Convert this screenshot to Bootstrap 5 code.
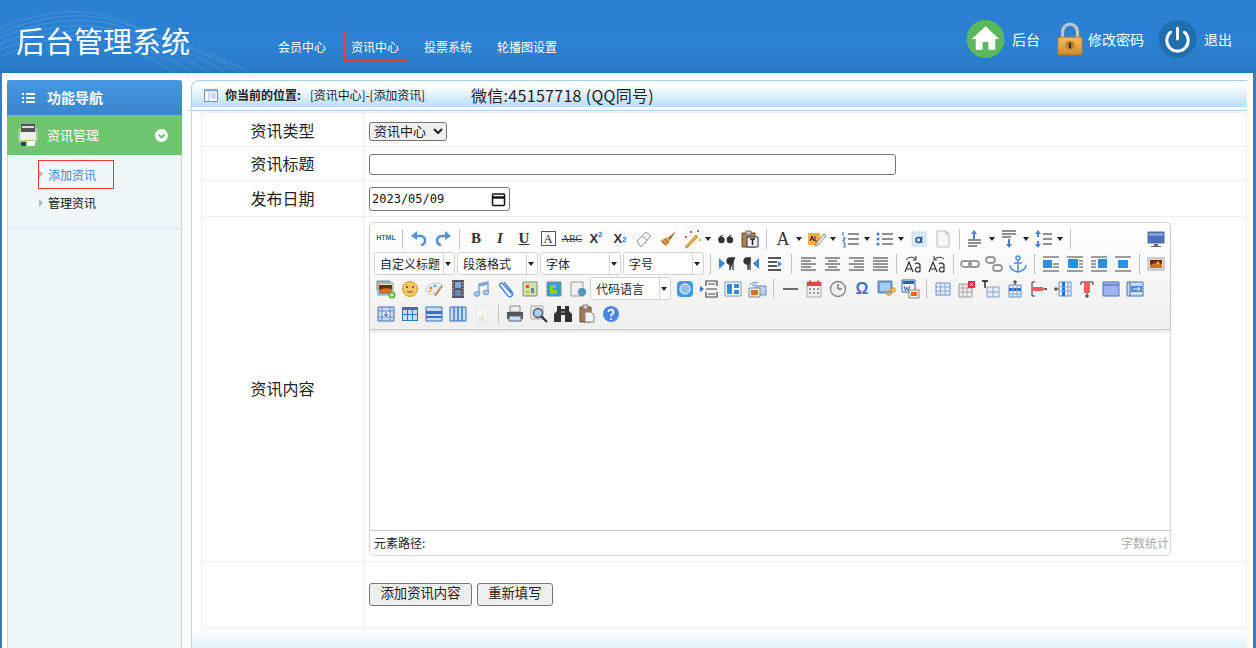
<!DOCTYPE html>
<html lang="zh-CN">
<head>
    <meta charset="UTF-8">
    <meta name="viewport" content="width=device-width, initial-scale=1.0">
    <title>后台管理系统</title>
    <link href="https://cdn.jsdelivr.net/npm/bootstrap@5.3.0/dist/css/bootstrap.min.css" rel="stylesheet">
    <style>
        html, body { height: 100%; overflow: hidden; }
        body { background: #2a82d2; font-family: "Noto Sans CJK SC", "Liberation Sans", sans-serif; font-size: 12px; color: #222; }

        .top-bar { position: relative; height: 73px; background: linear-gradient(#2b80cf, #2b82d3 60%, #2a7cc8 95%, #2471b8); color: #fff; overflow: hidden; }
        .top-wave { position: absolute; left: 0; top: 0; }
        .top-title { position: relative; width: 262px; padding-left: 16px; font-size: 29px; line-height: 80px; white-space: nowrap; }
        .top-nav { position: relative; padding-top: 31px; }
        .top-link { display: block; width: 73px; height: 30px; padding-left: 15px; line-height: 30px; color: #fff; text-decoration: none; white-space: nowrap; border: 1px solid transparent; }
        .top-link.on { border-color: transparent transparent #ea3a3a #ea3a3a; width: 65px; margin: 0 -1px 0 9px; padding-left: 6px; }
        .top-tools { position: relative; padding-right: 24px; padding-top: 19px; font-size: 14px; }
        .tool-item { height: 40px; line-height: 40px; color: #fff; text-decoration: none; white-space: nowrap; }
        .tool-home { margin-right: 17px; }
        .tool-lock { margin-right: 14px; }
        .tool-icon { margin-right: 7px; }
        .tool-lock .tool-icon { margin-right: 5px; }

        .page-wrap { height: 575px; margin: 0 3px 0 2px; background: linear-gradient(#eaf2f8, #fff 7px); }
        .side-col { width: 175px; margin: 7px 9px 0 5px; flex: none; background: #f0f7fb; border: solid #c5d5e2; border-width: 0 1px 0 1px; }
        .side-head { height: 35px; margin: 0 -1px; padding-left: 15px; background: linear-gradient(#4498e2, #3b86cc); border-radius: 3px 3px 0 0; color: #fff; font-size: 14px; font-weight: 700; }
        .side-head svg { margin-right: 12px; }
        .side-group { height: 40px; margin: 0 -1px 0 -1px; padding: 0 14px 0 11px; background: #6dc66f; color: #fff; font-size: 13px; }
        .side-group svg:first-child { margin-right: 9px; }
        .side-list { height: 74px; border-bottom: 1px solid #dce7ef; padding-top: 5px; }
        .side-link { position: relative; display: block; width: 76px; height: 29px; margin-left: 30px; padding-left: 9px; line-height: 27px; color: #111; text-decoration: none; border: 1px solid transparent; }
        .side-link + .side-link { height: 28px; line-height: 26px; }
        .side-link::before { content: ""; position: absolute; left: 0; top: 9px; border: 4px solid transparent; border-left-color: #a9bccb; border-right: 0; }
        .side-link.on { border-color: #ea3a3a; color: #4a7fd6; }

        .main-col { width: 1062px; flex: none; padding-top: 7px; }
        .crumb-line { margin: 0 6px 0 -3px; padding: 0 0 1px 3px; border-bottom: 1px solid #a8d4f0; }
        .crumb-bar { height: 29px; padding-left: 12px; border: solid #a4d2f0; border-width: 1px 0 0 1px; border-radius: 8px 0 0 0; background: linear-gradient(#fff 15%, #b9dff7 92%, #fff 93%); }
        .crumb-bar b { margin-left: 7px; }
        .crumb-path { margin-left: 9px; letter-spacing: -.1px; }
        .crumb-wx { margin-left: 46px; font-size: 16px; letter-spacing: .3px; }
        .form-pane { margin-right: 6px; padding: 1px 0 0 9px; border-left: 1px solid #c5d5e2; }
        .pane-foot { height: 20px; margin-right: 6px; border-left: 1px solid #c5d5e2; background: linear-gradient(#fff, #e2f1fb); }

        .info-tbl { table-layout: fixed; width: 1046px; margin: 0; --bs-border-color: #eee; }
        .info-tbl td { padding: 0 5px; vertical-align: middle; }
        .info-tbl .tbl-label { width: 162px; text-align: center; font-size: 16px; color: #222; }
        .info-tbl .r-title .tbl-label, .info-tbl .r-date .tbl-label, .info-tbl .r-editor .tbl-label { padding-bottom: 2px; }
        .r-type { height: 34px; } .info-tbl .r-type td:last-child { padding-top: 3px; }
        .r-title { height: 34px; } .info-tbl .r-title td:last-child { padding-top: 2px; }
        .r-date { height: 36px; } .info-tbl .r-date td:last-child { padding-top: 1px; }
        .r-editor { height: 345px; } .info-tbl .r-editor td:last-child { padding-top: 5px; padding-bottom: 5px; vertical-align: top; }
        .r-actions { height: 67px; } .info-tbl .r-actions td:last-child { padding-bottom: 2px; }
        .plain-select { display: block; width: 78px; height: 19px; font: 13px "Liberation Sans", "Noto Sans CJK SC", sans-serif; color: #222; padding: 0; border-radius: 3px; }
        .plain-input { display: block; width: 527px; height: 21px; border: 1px solid #767676; border-radius: 3px; }
        .plain-date { width: 141px; height: 24px; padding: 0 3px 0 2px; background: #fff; border: 1px solid #767676; border-radius: 3px; }
        .date-text { width: 110px; padding: 0; border: 0; outline: 0; font: 12px "DejaVu Sans Mono", monospace; color: #111; }
        .plain-btn { height: 23px; padding: 0 10.5px; font: 13.33px/20px "Liberation Sans", "Noto Sans CJK SC", sans-serif; background: #efefef; color: #222; border: 1px solid #767676; border-radius: 3px; margin-right: 2px; }

        .edit-box { width: 802px; height: 334px; border: 1px solid #d4d4d4; border-radius: 5px; background: #fff; }
        .edit-bar { height: 107px; padding: 3px 2px 0 4px; background: linear-gradient(#fff, #efefef); border-bottom: 1px solid #ccc; border-radius: 5px 5px 0 0; box-shadow: 0 2px 4px rgba(0, 0, 0, .12); }
        .edit-row { height: 25px; }
        .tb-btn { display: flex; align-items: center; justify-content: center; width: 24px; height: 25px; flex: none; color: #333; }
        .tb-btn svg { width: 20px; height: 20px; display: block; }
        .tb-split { width: 34px; justify-content: flex-start; padding-left: 2px; }
        .tb-split::after { content: ""; margin-left: 3px; border: 3px solid transparent; border-top: 4px solid #222; border-bottom: 0; }
        .tb-sep { width: 9px; height: 20px; flex: none; background: linear-gradient(#c4c4c4, #c4c4c4) center / 1px 100% no-repeat; }
        .tb-combo { display: flex; width: 81px; height: 23px; margin-right: 2px; flex: none; background: #fff; border: 1px solid #d4d4d4; border-radius: 3px; line-height: 21px; padding-left: 5px; white-space: nowrap; position: relative; }
        .tb-combo::after { content: ""; position: absolute; right: 0; top: 0; bottom: 0; width: 11px; border-left: 1px solid #d4d4d4; }
        .tb-combo::before { content: ""; position: absolute; right: 3px; top: 9px; border: 3px solid transparent; border-top: 4px solid #222; border-bottom: 0; }
        .tb-serif { font-family: "Liberation Serif", serif; font-size: 15px; font-weight: 700; line-height: 1; color: #333; }
        .tb-html { font-family: "Liberation Sans", sans-serif; font-size: 7px; font-weight: 700; color: #2a6aa8; }
        .tb-box { width: 15px; height: 15px; border: 1px solid #555; text-align: center; font-size: 13px; font-weight: 400; }
        .tb-abc { font-size: 10px; font-weight: 400; text-decoration: line-through; }
        .tb-big-a { width: 20px; text-align: center; font-size: 18px; font-weight: 400; }
        .tb-x { font-family: "Liberation Sans", sans-serif; font-size: 13px; font-weight: 700; color: #333; }
        .tb-x sup, .tb-x sub { font-size: 8px; color: #2a6ad0; top: -.5em; }
        .tb-x sub { top: .2em; bottom: auto; }
        .tb-omega { font-family: "Liberation Sans", sans-serif; font-size: 16px; font-weight: 700; color: #3a76c8; }
        .edit-body { height: 200px; }
        .edit-foot { height: 25px; padding: 0 1px 0 4px; border-top: 1px solid #ccc; line-height: 24px; }
        .edit-count { color: #aaa; }
    </style>
</head>

<body>
    <!-- shared toolbar icons -->
    <svg width="0" height="0" class="position-absolute">
        <defs>
            <linearGradient id="lock-body" x1="0" y1="0" x2="0" y2="1"><stop offset="0" stop-color="#f4c060"/><stop offset="1" stop-color="#d08a2c"/></linearGradient>
            <symbol id="i-undo" viewBox="0 0 20 20"><path d="M7 7h4a4.500 4.500 0 0 1 1 9" fill="none" stroke="#4d94d8" stroke-width="2.600"/><path d="M8 2v9L2 7z" fill="#4d94d8"/></symbol>
            <symbol id="i-redo" viewBox="0 0 20 20"><path d="M13 7H9a4.500 4.500 0 0 0-1 9" fill="none" stroke="#4d94d8" stroke-width="2.600"/><path d="M12 2v9l6-4z" fill="#4d94d8"/></symbol>
            <symbol id="i-eraser" viewBox="0 0 20 20"><path d="M3 12 12 3l5 4-9 10H6z" fill="#eee" stroke="#999"/><path d="M3 12 8 7l5 4-5 6H6z" fill="#fff" stroke="#999"/></symbol>
            <symbol id="i-brush" viewBox="0 0 20 20"><path d="M18 2 10 9l2 2z" fill="#8a5a2a"/><path d="M9 8 2 12c2 1 3 4 6 5 2-1 4-4 4-6z" fill="#d8a050"/><path d="M4 12l3 3M7 10l3 4" stroke="#8a6030"/></symbol>
            <symbol id="i-wand" viewBox="0 0 20 20"><path d="M3 18 14 6l2 2L5 19z" fill="#f0b040" stroke="#b87820" stroke-width=".7"/><path d="M8 3h2M9 2v2M15 2h2M16 1v2M3 8h2M4 7v2" stroke="#e84030" stroke-width="1.300"/><path d="M17 11h2M18 10v2" stroke="#e8a020" stroke-width="1.300"/></symbol>
            <symbol id="i-quote" viewBox="0 0 20 20"><circle cx="5.500" cy="11" r="3.200" fill="#333"/><circle cx="14" cy="11" r="3.200" fill="#333"/><path d="M2.300 11C2.300 8 4.500 6 8 6 5.800 7 5 8.500 5 10zM10.800 11c0-3 2.200-5 5.700-5-2.200 1-3 2.500-3 4z" fill="#333"/></symbol>
            <symbol id="i-paste" viewBox="0 0 20 20"><path d="M2 4h13v14H2z" fill="#b08050" stroke="#6a4a30"/><path d="M6 2h5v4H6z" fill="#ccc" stroke="#666"/><path d="M7 8h11v10H7z" fill="#eef" stroke="#333"/><path d="M10 10h5M12.500 10v6" stroke="#222" stroke-width="1.500"/></symbol>
            <symbol id="i-hl" viewBox="0 0 20 20"><path d="M1 4h12v12H1z" fill="#f4b040"/><path d="M9 15 17 5l2 2-8 9-3 1z" fill="#fff" stroke="#666" stroke-width=".8"/><path d="M3 12l2-5 2 5M4 10h2M8 7v5h2" stroke="#222" fill="none"/></symbol>
            <symbol id="i-ol" viewBox="0 0 20 20"><path d="M2 3v4M2 9h2l-2 3h2M2 14h2v4H2" stroke="#3a78d0" fill="none" stroke-width="1.200"/><path d="M7 5h11M7 10h11M7 15h11" stroke="#222" stroke-width="1.200"/></symbol>
            <symbol id="i-ul" viewBox="0 0 20 20"><circle cx="3" cy="5" r="1.500" fill="#3a78d0"/><circle cx="3" cy="10" r="1.500" fill="#3a78d0"/><circle cx="3" cy="15" r="1.500" fill="#3a78d0"/><path d="M7 5h11M7 10h11M7 15h11" stroke="#222" stroke-width="1.200"/></symbol>
            <symbol id="i-doc" viewBox="0 0 20 20"><path d="M4 2h9l3 3v13H4z" fill="#f6f6f6" stroke="#bbb"/><path d="M13 2v3h3" fill="#ddd" stroke="#bbb"/></symbol>
            <symbol id="i-sp-top" viewBox="0 0 20 20"><path d="M8 1l3 4H9v5H7V5H5z" fill="#4a82d0"/><path d="M2 11h13M2 14h13M2 17h9" stroke="#222" stroke-width="1.200"/></symbol>
            <symbol id="i-sp-bot" viewBox="0 0 20 20"><path d="M2 2h14M2 5h14M2 8h9" stroke="#222" stroke-width="1.200"/><path d="M9 19l-3-4h2v-5h2v5h2z" fill="#4a82d0"/></symbol>
            <symbol id="i-sp-line" viewBox="0 0 20 20"><path d="M4 1l3 4H5v3H3V5H1zM4 19l-3-4h2v-3h2v3h2z" fill="#4a82d0"/><path d="M9 5h9M9 10h9M9 15h9" stroke="#222" stroke-width="1.200"/></symbol>
            <symbol id="i-screen" viewBox="0 0 20 20"><path d="M2 3h16v11H2z" fill="#4a6ec0" stroke="#50708a"/><path d="M3 4h14v3H3z" fill="#7f9ce0"/><path d="M8 15h4v2H8zM5 17h10v1H5z" fill="#667"/></symbol>
            <symbol id="i-ltr" viewBox="0 0 20 20"><path d="M2 4v11l6-5.500z" fill="#3a86e0"/><path d="M13 16V4h5M16 4v12M13 4a3 3 0 0 0-3 3 3 3 0 0 0 3 3z" stroke="#333" stroke-width="1.300" fill="#333"/></symbol>
            <symbol id="i-rtl" viewBox="0 0 20 20"><path d="M18 4v11l-6-5.500z" fill="#3a86e0"/><path d="M7 16V4h3M9 4v12M7 4a3 3 0 0 0-4 3 3 3 0 0 0 4 3z" stroke="#333" stroke-width="1.300" fill="#333"/></symbol>
            <symbol id="i-indent" viewBox="0 0 20 20"><path d="M3 4h13M3 8h9M3 12h9M3 16h13" stroke="#222" stroke-width="1.300"/><path d="M13 7l4 3-4 3z" fill="#3a86e0"/></symbol>
            <symbol id="i-al" viewBox="0 0 20 20"><path d="M3 4h15M3 7h10M3 10h15M3 13h10M3 16h15" stroke="#333" stroke-width="1.200"/></symbol>
            <symbol id="i-ac" viewBox="0 0 20 20"><path d="M3 4h15M6 7h9M3 10h15M6 13h9M3 16h15" stroke="#333" stroke-width="1.200"/></symbol>
            <symbol id="i-ar" viewBox="0 0 20 20"><path d="M3 4h15M8 7h10M3 10h15M8 13h10M3 16h15" stroke="#333" stroke-width="1.200"/></symbol>
            <symbol id="i-aj" viewBox="0 0 20 20"><path d="M3 4h15M3 7h15M3 10h15M3 13h15M3 16h15" stroke="#333" stroke-width="1.200"/></symbol>
            <symbol id="i-case-u" viewBox="0 0 20 20"><path d="M3 6a6 5 0 0 1 10-1M13 2v4h-3" stroke="#333" fill="none"/><path d="M2 18 6 8l4 10M4 15h5M12 10a3 3 0 0 1 5 1v7M17 13c-6 0-6 5-2 5 1 0 2-1 2-2" stroke="#222" stroke-width="1.100" fill="none"/></symbol>
            <symbol id="i-case-l" viewBox="0 0 20 20"><path d="M7 6a6 5 0 0 1 10-1M7 2v4h3" stroke="#333" fill="none"/><path d="M2 18 6 8l4 10M4 15h5M12 10a3 3 0 0 1 5 1v7M17 13c-6 0-6 5-2 5 1 0 2-1 2-2" stroke="#222" stroke-width="1.100" fill="none"/></symbol>
            <symbol id="i-link" viewBox="0 0 20 20"><rect x="1" y="7" width="10" height="6" rx="3" fill="none" stroke="#999" stroke-width="1.800"/><rect x="9" y="7" width="10" height="6" rx="3" fill="none" stroke="#999" stroke-width="1.800"/></symbol>
            <symbol id="i-unlink" viewBox="0 0 20 20"><rect x="2" y="3" width="9" height="6" rx="3" fill="none" stroke="#999" stroke-width="1.800"/><rect x="9" y="11" width="9" height="6" rx="3" fill="none" stroke="#999" stroke-width="1.800"/></symbol>
            <symbol id="i-anchor" viewBox="0 0 20 20"><circle cx="10" cy="4" r="2" fill="none" stroke="#4a90d8" stroke-width="1.400"/><path d="M10 6v12M6 9h8M2 11c0 4 4 6 8 7 4-1 8-3 8-7" fill="none" stroke="#4a90d8" stroke-width="1.500"/></symbol>
            <symbol id="i-img-l" viewBox="0 0 20 20"><path d="M2 3h16M2 17h16M12 10h6M12 13h6" stroke="#444"/><path d="M2 6h9v8H2z" fill="#2a90e0"/></symbol>
            <symbol id="i-img-r" viewBox="0 0 20 20"><path d="M2 3h16M2 17h16M14 7h4M14 10h4M14 13h4" stroke="#444"/><path d="M3 5h10v9H3z" fill="#2a90e0"/></symbol>
            <symbol id="i-img-n" viewBox="0 0 20 20"><path d="M2 3h16M2 17h16M2 7h5M2 10h5M2 13h5" stroke="#444"/><path d="M9 5h9v9H9z" fill="#2a90e0"/></symbol>
            <symbol id="i-img-c" viewBox="0 0 20 20"><path d="M2 3h16M2 17h16" stroke="#444" stroke-width="1.200"/><path d="M5 6h10v8H5z" fill="#2a90e0"/></symbol>
            <symbol id="i-photo" viewBox="0 0 20 20"><path d="M2 4h16v12H2z" fill="#ddd" stroke="#aaa"/><path d="M4 6h12v8H4z" fill="#6a3010"/><path d="M4 11c4-2 8-2 12-1v4H4z" fill="#d87020"/><circle cx="12" cy="9" r="1.500" fill="#f0c030"/></symbol>
            <symbol id="i-photos" viewBox="0 0 20 20"><path d="M1 2h13v9H1z" fill="#bbb" stroke="#888"/><path d="M2 4h15v12H2z" fill="#ddd" stroke="#999"/><path d="M3 6h13v9H3z" fill="#6a3010"/><path d="M3 11c4-2 8-2 13-1v5H3z" fill="#d87020"/><circle cx="16" cy="16" r="3.500" fill="#62b030"/><path d="M14 16h4M16 14v4" stroke="#fff"/></symbol>
            <symbol id="i-emoji" viewBox="0 0 20 20"><circle cx="10" cy="10" r="7.500" fill="#f8c860" stroke="#d89030"/><circle cx="7" cy="8" r="1" fill="#732"/><circle cx="13" cy="8" r="1" fill="#732"/><path d="M6 12c2 3 6 3 8 0z" fill="#a84"/></symbol>
            <symbol id="i-palette" viewBox="0 0 20 20"><path d="M2 11c0-5 8-8 14-7 3 2 1 4-2 5 1 2 2 6-4 6-5 1-8-1-8-4z" fill="#eee" stroke="#ccc"/><circle cx="7" cy="9" r="1.300" fill="#e86050"/><circle cx="11" cy="7" r="1.300" fill="#50a0e0"/><circle cx="6" cy="12" r="1.300" fill="#e0c040"/><path d="M10 16 18 6l1 1-7 10z" fill="#b88a50"/></symbol>
            <symbol id="i-film" viewBox="0 0 20 20"><path d="M4 1h12v18H4z" fill="#556"/><path d="M7 3h6v6H7z" fill="#7fa8d8"/><path d="M7 11h6v6H7z" fill="#5f88c0"/><path d="M5 3v14M15 3v14" stroke="#ccc" stroke-dasharray="1.500 1.500"/></symbol>
            <symbol id="i-music" viewBox="0 0 20 20"><path d="M7 5v10M16 3v10M7 5l9-2v2L7 7z" stroke="#78a8dc" stroke-width="1.500" fill="#78a8dc"/><ellipse cx="5" cy="15" rx="2.800" ry="2.300" fill="#a8ccf0" stroke="#6a9ad0"/><ellipse cx="14" cy="13.500" rx="2.800" ry="2.300" fill="#a8ccf0" stroke="#6a9ad0"/></symbol>
            <symbol id="i-clip" viewBox="0 0 20 20"><path d="M16 15 7 5c-2-2-4 0-3 2l8 10c3 2 6-1 4-4L8 3" fill="none" stroke="#4a88d8" stroke-width="1.500"/></symbol>
            <symbol id="i-map" viewBox="0 0 20 20"><path d="M3 3h14v14H3z" fill="#cde4a8" stroke="#888"/><path d="M6 6h3v3H6z" fill="#d85040"/><path d="M11 9h3v5h-3z" fill="#5090d0"/><path d="M6 12h3v2H6z" fill="#e0b040"/></symbol>
            <symbol id="i-gmap" viewBox="0 0 20 20"><path d="M3 3h14v14H3z" fill="#30a0d0" stroke="#888"/><path d="M6 6h6v3H9v2h4v4H6z" fill="#90c840"/></symbol>
            <symbol id="i-frame" viewBox="0 0 20 20"><path d="M3 3h12v14H3z" fill="#f0f0f0" stroke="#999"/><circle cx="14" cy="13" r="4" fill="#4a90d0"/><path d="M11 12c2 0 2 3 4 3" stroke="#9c6"/></symbol>
            <symbol id="i-web" viewBox="0 0 20 20"><rect x="2" y="2" width="16" height="16" rx="4" fill="#4a96e0"/><circle cx="10" cy="10" r="5" fill="#8cc0f0" stroke="#fff"/></symbol>
            <symbol id="i-break" viewBox="0 0 20 20"><path d="M7 7V2h11v5M7 13v5h11v-5" fill="none" stroke="#444" stroke-width="1.200"/><path d="M9 5h7M9 15h7M7 10h11" stroke="#444"/><path d="M1 7v6l4-3z" fill="#2a70d0"/></symbol>
            <symbol id="i-tpl" viewBox="0 0 20 20"><path d="M2 3h16v14H2z" fill="#fff" stroke="#6a9ac8"/><path d="M4 5h5v10H4zM11 5h5v4h-5zM11 11h5v4h-5z" fill="#3a8ad0"/></symbol>
            <symbol id="i-bg" viewBox="0 0 20 20"><path d="M8 7h11v9H8z" fill="#bcd0ec" stroke="#6a8ab8"/><path d="M2 9h11v9H2z" fill="#eee" stroke="#888"/><path d="M4 11h7v5H4z" fill="#d87020"/><path d="M3 6a6 6 0 0 1 8-2M5 7a3 3 0 0 1 4-1" stroke="#4a90d0" fill="none"/></symbol>
            <symbol id="i-hr" viewBox="0 0 20 20"><path d="M3 10h15" stroke="#222" stroke-width="1.300"/></symbol>
            <symbol id="i-date" viewBox="0 0 20 20"><path d="M3 3h14v15H3z" fill="#f0f0f0" stroke="#aaa"/><path d="M3 3h14v4H3z" fill="#e04848"/><path d="M5 9h2v2H5zM9 9h2v2H9zM13 9h2v2h-2zM5 13h2v2H5zM9 13h2v2H9zM13 13h2v2h-2z" fill="#999"/><path d="M6 1v3M14 1v3" stroke="#555"/></symbol>
            <symbol id="i-clock" viewBox="0 0 20 20"><circle cx="10" cy="10" r="7.500" fill="#eee" stroke="#888" stroke-width="1.300"/><path d="M10 5v5h4" stroke="#444" fill="none"/></symbol>
            <symbol id="i-snap" viewBox="0 0 20 20"><path d="M2 2h14v12H2z" fill="#6aa4dc" stroke="#5a86b0"/><path d="M4 4h10v8H4z" fill="#a8cdf0"/><circle cx="13" cy="14" r="2" fill="none" stroke="#d8a030" stroke-width="1.500"/><circle cx="17" cy="11" r="2" fill="none" stroke="#d8a030" stroke-width="1.500"/></symbol>
            <symbol id="i-word" viewBox="0 0 20 20"><path d="M2 1h13v12H2z" fill="#fff" stroke="#2a60b0"/><path d="M3 2h11v3H3z" fill="#2a60b0"/><path d="M4 7l1.500 5L7 8l1.500 4L10 7" stroke="#2a60b0" fill="none"/><path d="M9 11h10v8H9z" fill="#eee" stroke="#888"/><path d="M11 13h6v4h-6z" fill="#d87020"/></symbol>
            <symbol id="i-grid" viewBox="0 0 20 20"><path d="M3 4h14v12H3z" fill="#e6eefb" stroke="#6a8ccc"/><path d="M3 8h14M3 12h14M7.500 4v12M12 4v12" stroke="#8aa6dc"/></symbol>
            <symbol id="i-grid-del" viewBox="0 0 20 20"><path d="M2 5h13v13H2z" fill="#eee" stroke="#999"/><path d="M2 9h13M2 13h13M6 5v13M10 5v13" stroke="#aaa"/><path d="M11 2h7v7h-7z" fill="#e83040"/><path d="M13 4l3 3M16 4l-3 3" stroke="#fff"/></symbol>
            <symbol id="i-caption" viewBox="0 0 20 20"><path d="M1 2h6M4 2v7" stroke="#111" stroke-width="1.300"/><path d="M6 8h12v10H6z" fill="#e6eefb" stroke="#8aa0c8"/><path d="M6 13h12M12 8v10" stroke="#8aa0c8"/></symbol>
            <symbol id="i-row-up" viewBox="0 0 20 20"><path d="M4 6h12v12H4z" fill="#e6eefb" stroke="#6a8ccc"/><path d="M4 9h12v3H4z" fill="#2a70d0"/><path d="M4 15h12M8 6v12M12 6v12" stroke="#8aa6dc"/><path d="M10 1v5M8 3h4" stroke="#222"/></symbol>
            <symbol id="i-row-del" viewBox="0 0 20 20"><path d="M3 3h3M3 17h3M3 3v14" stroke="#333" fill="none"/><path d="M3 8h11v4H3z" fill="#e86060"/><path d="M14 10h4M17 9v2" stroke="#222"/></symbol>
            <symbol id="i-col-ins" viewBox="0 0 20 20"><path d="M6 3h12v14H6z" fill="#e6eefb" stroke="#6a8ccc"/><path d="M9 3h3v14H9z" fill="#2a70d0"/><path d="M6 8h12M6 12h12M15 3v14" stroke="#8aa6dc"/><path d="M1 10h5M3 8v4" stroke="#222"/></symbol>
            <symbol id="i-col-del" viewBox="0 0 20 20"><path d="M4 3v3M16 3v3M4 3h12" stroke="#333"/><path d="M7 3h6v11H7z" fill="#e86060"/><path d="M10 14v5M8 17h4" stroke="#222"/></symbol>
            <symbol id="i-merge" viewBox="0 0 20 20"><path d="M2 3h16v14H2z" fill="#a0b4ec" stroke="#4a70b0"/><path d="M2 6h16" stroke="#6a8cc8" stroke-width="2"/></symbol>
            <symbol id="i-merge-r" viewBox="0 0 20 20"><path d="M2 3h16v14H2z" fill="#c8dcf4" stroke="#4a70b0"/><path d="M5 3v14" stroke="#4a70b0"/><path d="M6 7h11v6H6z" fill="#4a88d8"/><path d="M8 10h7M13 8l2 2-2 2" stroke="#fff" fill="none"/></symbol>
            <symbol id="i-merge-d" viewBox="0 0 20 20"><path d="M2 3h16v14H2z" fill="#c8dcf4" stroke="#4a70b0"/><path d="M2 7h16M2 13h16M6 3v14M14 3v14" stroke="#6a8cc8"/><path d="M7 8h6v4H7z" fill="#fff"/><path d="M10 8v4M8 10l2 2 2-2" stroke="#2a60b0" fill="none"/></symbol>
            <symbol id="i-cell-h" viewBox="0 0 20 20"><path d="M2 3h16v14H2z" fill="#3a70c0"/><path d="M3 6h4v4H3zM8 6h4v4H8zM13 6h4v4h-4zM3 11h4v5H3zM8 11h4v5H8zM13 11h4v5h-4z" fill="#c8dcf4"/></symbol>
            <symbol id="i-cell-r" viewBox="0 0 20 20"><path d="M2 3h16v14H2z" fill="#c8dcf4" stroke="#3a70c0"/><path d="M2 7h16v3H2zM2 12h16v2H2z" fill="#3a70c0"/></symbol>
            <symbol id="i-cell-c" viewBox="0 0 20 20"><path d="M2 3h16v14H2z" fill="#c8dcf4" stroke="#3a70c0"/><path d="M6 3v14M10 3v14M14 3v14" stroke="#3a70c0" stroke-width="1.400"/></symbol>
            <symbol id="i-chart" viewBox="0 0 20 20"><path d="M4 2h9l3 3v13H4z" fill="#f6f6f6" stroke="#e4e4e4"/><path d="M7 13h2v4H7zM10 10h2v7h-2z" fill="#d8e8c8"/></symbol>
            <symbol id="i-print" viewBox="0 0 20 20"><path d="M5 2h10v6H5z" fill="#eee" stroke="#888"/><path d="M2 8h16v7H2z" fill="#555"/><path d="M4 12h12v5H4z" fill="#cde" stroke="#567"/></symbol>
            <symbol id="i-find" viewBox="0 0 20 20"><path d="M2 2h12v13H2z" fill="#eee" stroke="#aaa"/><circle cx="9" cy="9" r="4.500" fill="#a8d0e8" stroke="#556"  stroke-width="1.300"/><path d="M12 12l6 6" stroke="#333" stroke-width="2.200"/></symbol>
            <symbol id="i-binoc" viewBox="0 0 20 20"><path d="M4 2h4v3h4V2h4v5l3 3v8h-7v-7H8v7H1v-8l3-3z" fill="#333"/><path d="M8 7h4v2H8z" fill="#777"/></symbol>
            <symbol id="i-pdoc" viewBox="0 0 20 20"><path d="M3 3h11v15H3z" fill="#a87850" stroke="#6a4a30"/><path d="M6 1h5v4H6z" fill="#ccc" stroke="#777"/><path d="M8 8h6l3 3v7H8z" fill="#f0f0f0" stroke="#888"/></symbol>
            <symbol id="i-help" viewBox="0 0 20 20"><circle cx="10" cy="10" r="8" fill="#4a84e4"/><path d="M7.500 8a2.500 2.500 0 1 1 3.500 2.300c-1 .5-1 1-1 2" fill="none" stroke="#fff" stroke-width="1.800"/><circle cx="10" cy="15" r="1.100" fill="#fff"/></symbol>
            <symbol id="i-a-box" viewBox="0 0 20 20"><path d="M3 3h14v14H3z" fill="#dde8f6" stroke="#bcd0ea" stroke-dasharray="2 1"/><circle cx="9.500" cy="11" r="2.500" fill="none" stroke="#2a5a90" stroke-width="1.600"/><path d="M12.500 7.500V14" stroke="#2a5a90" stroke-width="1.600"/></symbol>
        </defs>
    </svg>

    <header class="top-bar d-flex">
        <svg class="top-wave" width="300" height="73" viewBox="0 0 300 73" fill="none" stroke="#6aa8e0" stroke-opacity=".45">
            <path d="M0 28C50 8 90 6 130 24s90 30 120 49"/>
            <path d="M0 33C50 12 95 10 135 28s85 28 105 45"/>
            <path d="M0 38C50 17 95 14 135 32s70 24 90 41"/>
            <path d="M0 44C50 22 95 20 130 36s60 22 78 37"/>
            <path d="M0 50C50 28 90 24 125 40s50 20 68 33"/>
            <path d="M0 57C50 34 90 30 120 44s40 18 55 29"/>
        </svg>
        <div class="top-title">后台管理系统</div>
        <nav class="top-nav d-flex">
            <a class="top-link" href="#">会员中心</a>
            <a class="top-link on" href="#">资讯中心</a>
            <a class="top-link" href="#">投票系统</a>
            <a class="top-link" href="#">轮播图设置</a>
        </nav>
        <div class="top-tools d-flex ms-auto">
            <a class="tool-item tool-home d-flex" href="#">
                <svg class="tool-icon" width="39" height="40" viewBox="0 0 40 40"><circle cx="20" cy="20" r="19.500" fill="#5cb85c"/><path d="M20 7 6 20h4v11h7v-8h6v8h7V20h4z" fill="#fff"/></svg>
                后台
            </a>
            <a class="tool-item tool-lock d-flex" href="#">
                <svg class="tool-icon" width="26" height="40" viewBox="0 0 28 40"><path d="M6 19v-7a8 8 0 0 1 16 0v7" fill="none" stroke="#c4c4c4" stroke-width="3.500"/><rect x="1" y="18" width="26" height="19" rx="2" fill="url(#lock-body)" stroke="#b87a20"/><circle cx="14" cy="27" r="5" fill="#c87c20"/><path d="M14 24v6" stroke="#222" stroke-width="2"/></svg>
                修改密码
            </a>
            <a class="tool-item d-flex" href="#">
                <svg class="tool-icon" width="39" height="40" viewBox="0 0 40 40"><circle cx="20" cy="20" r="19.500" fill="#1f6fae"/><path d="M20 9v11" stroke="#fff" stroke-width="3" stroke-linecap="round"/><path d="M13 13a11 11 0 1 0 14 0" fill="none" stroke="#fff" stroke-width="3" stroke-linecap="round"/></svg>
                退出
            </a>
        </div>
    </header>

    <div class="page-wrap d-flex">
        <aside class="side-col">
            <div class="side-head d-flex align-items-center">
                <svg width="13" height="12" viewBox="0 0 13 12" fill="#fff"><path d="M0 1h2v2H0zM4 1h9v2H4zM0 5h2v2H0zM4 5h9v2H4zM0 9h2v2H0zM4 9h9v2H4z"/></svg>
                功能导航
            </div>
            <div class="side-group d-flex align-items-center">
                <svg width="20" height="24" viewBox="0 0 20 24"><circle cx="10" cy="12" r="11" fill="#a8d088"/><path d="M3 1h14v8H3z" fill="#555"/><path d="M4 3h12v2H4z" fill="#ddd"/><path d="M2 9h16v8H2z" fill="#eee"/><path d="M3 19h5v4H3z" fill="#345"/><path d="M9 18h8v5H9z" fill="#fff"/></svg>
                <span>资讯管理</span>
                <svg class="ms-auto" width="13" height="13" viewBox="0 0 13 13"><circle cx="6.500" cy="6.500" r="6.500" fill="#fff"/><path d="M3.500 5.500l3 3 3-3" fill="none" stroke="#6dc66f" stroke-width="1.800"/></svg>
            </div>
            <div class="side-list">
                <a class="side-link on" href="#">添加资讯</a>
                <a class="side-link" href="#">管理资讯</a>
            </div>
        </aside>

        <main class="main-col d-flex flex-column">
            <div class="crumb-line">
                <div class="crumb-bar d-flex align-items-center">
                    <svg width="14" height="13" viewBox="0 0 14 13"><path d="M.5.500h13v12H.5z" fill="#fff" stroke="#6c8fc4"/><path d="M.5.500h13v2H.5z" fill="#8fb0dc"/><path d="M5 3v9M7 5h5M7 7h5M7 9h5" stroke="#9db6d8"/></svg>
                    <b>你当前的位置:</b>
                    <span class="crumb-path">[资讯中心]-[添加资讯]</span>
                    <span class="crumb-wx">微信:45157718 (QQ同号)</span>
                </div>
            </div>
            <div class="form-pane">
                <table class="table table-bordered info-tbl">
                    <tr class="r-type">
                        <td class="tbl-label">资讯类型</td>
                        <td><select class="plain-select"><option>资讯中心</option></select></td>
                    </tr>
                    <tr class="r-title">
                        <td class="tbl-label">资讯标题</td>
                        <td><input class="plain-input" type="text"></td>
                    </tr>
                    <tr class="r-date">
                        <td class="tbl-label">发布日期</td>
                        <td>
                            <label class="plain-date d-flex align-items-center justify-content-between">
                                <input class="date-text" type="text" value="2023/05/09">
                                <svg width="15" height="15" viewBox="0 0 15 15" fill="none" stroke="#111" stroke-width="1.500"><rect x="1.500" y="2" width="12" height="11.500" rx="1"/><path d="M1.500 5.500h12" stroke-width="2.500"/></svg>
                            </label>
                        </td>
                    </tr>
                    <tr class="r-editor">
                        <td class="tbl-label">资讯内容</td>
                        <td>
                            <div class="edit-box">
                                <div class="edit-bar">
                                    <div class="edit-row d-flex align-items-center">
                                        <span class="tb-btn tb-html">HTML</span>
                                        <span class="tb-sep"></span>
                                        <span class="tb-btn"><svg><use href="#i-undo"/></svg></span>
                                        <span class="tb-btn"><svg><use href="#i-redo"/></svg></span>
                                        <span class="tb-sep"></span>
                                        <span class="tb-btn tb-serif">B</span>
                                        <span class="tb-btn tb-serif fst-italic">I</span>
                                        <span class="tb-btn tb-serif text-decoration-underline">U</span>
                                        <span class="tb-btn"><span class="tb-serif tb-box">A</span></span>
                                        <span class="tb-btn tb-serif tb-abc">ABC</span>
                                        <span class="tb-btn tb-x">X<sup>2</sup></span>
                                        <span class="tb-btn tb-x">X<sub>2</sub></span>
                                        <span class="tb-btn"><svg><use href="#i-eraser"/></svg></span>
                                        <span class="tb-btn"><svg><use href="#i-brush"/></svg></span>
                                        <span class="tb-btn tb-split"><svg><use href="#i-wand"/></svg></span>
                                        <span class="tb-btn"><svg><use href="#i-quote"/></svg></span>
                                        <span class="tb-btn"><svg><use href="#i-paste"/></svg></span>
                                        <span class="tb-sep"></span>
                                        <span class="tb-btn tb-split"><span class="tb-serif tb-big-a">A</span></span>
                                        <span class="tb-btn tb-split"><svg><use href="#i-hl"/></svg></span>
                                        <span class="tb-btn tb-split"><svg><use href="#i-ol"/></svg></span>
                                        <span class="tb-btn tb-split"><svg><use href="#i-ul"/></svg></span>
                                        <span class="tb-btn"><svg><use href="#i-a-box"/></svg></span>
                                        <span class="tb-btn"><svg><use href="#i-doc"/></svg></span>
                                        <span class="tb-sep"></span>
                                        <span class="tb-btn tb-split"><svg><use href="#i-sp-top"/></svg></span>
                                        <span class="tb-btn tb-split"><svg><use href="#i-sp-bot"/></svg></span>
                                        <span class="tb-btn tb-split"><svg><use href="#i-sp-line"/></svg></span>
                                        <span class="tb-sep"></span>
                                        <span class="tb-btn ms-auto"><svg><use href="#i-screen"/></svg></span>
                                    </div>
                                    <div class="edit-row d-flex align-items-center">
                                        <span class="tb-combo">自定义标题</span>
                                        <span class="tb-combo">段落格式</span>
                                        <span class="tb-combo">字体</span>
                                        <span class="tb-combo">字号</span>
                                        <span class="tb-sep"></span>
                                        <span class="tb-btn"><svg><use href="#i-ltr"/></svg></span>
                                        <span class="tb-btn"><svg><use href="#i-rtl"/></svg></span>
                                        <span class="tb-btn"><svg><use href="#i-indent"/></svg></span>
                                        <span class="tb-sep"></span>
                                        <span class="tb-btn"><svg><use href="#i-al"/></svg></span>
                                        <span class="tb-btn"><svg><use href="#i-ac"/></svg></span>
                                        <span class="tb-btn"><svg><use href="#i-ar"/></svg></span>
                                        <span class="tb-btn"><svg><use href="#i-aj"/></svg></span>
                                        <span class="tb-sep"></span>
                                        <span class="tb-btn"><svg><use href="#i-case-u"/></svg></span>
                                        <span class="tb-btn"><svg><use href="#i-case-l"/></svg></span>
                                        <span class="tb-sep"></span>
                                        <span class="tb-btn"><svg><use href="#i-link"/></svg></span>
                                        <span class="tb-btn"><svg><use href="#i-unlink"/></svg></span>
                                        <span class="tb-btn"><svg><use href="#i-anchor"/></svg></span>
                                        <span class="tb-sep"></span>
                                        <span class="tb-btn"><svg><use href="#i-img-l"/></svg></span>
                                        <span class="tb-btn"><svg><use href="#i-img-r"/></svg></span>
                                        <span class="tb-btn"><svg><use href="#i-img-n"/></svg></span>
                                        <span class="tb-btn"><svg><use href="#i-img-c"/></svg></span>
                                        <span class="tb-sep"></span>
                                        <span class="tb-btn"><svg><use href="#i-photo"/></svg></span>
                                    </div>
                                    <div class="edit-row d-flex align-items-center">
                                        <span class="tb-btn"><svg><use href="#i-photos"/></svg></span>
                                        <span class="tb-btn"><svg><use href="#i-emoji"/></svg></span>
                                        <span class="tb-btn"><svg><use href="#i-palette"/></svg></span>
                                        <span class="tb-btn"><svg><use href="#i-film"/></svg></span>
                                        <span class="tb-btn"><svg><use href="#i-music"/></svg></span>
                                        <span class="tb-btn"><svg><use href="#i-clip"/></svg></span>
                                        <span class="tb-btn"><svg><use href="#i-map"/></svg></span>
                                        <span class="tb-btn"><svg><use href="#i-gmap"/></svg></span>
                                        <span class="tb-btn"><svg><use href="#i-frame"/></svg></span>
                                        <span class="tb-combo">代码语言</span>
                                        <span class="tb-btn"><svg><use href="#i-web"/></svg></span>
                                        <span class="tb-btn"><svg><use href="#i-break"/></svg></span>
                                        <span class="tb-btn"><svg><use href="#i-tpl"/></svg></span>
                                        <span class="tb-btn"><svg><use href="#i-bg"/></svg></span>
                                        <span class="tb-sep"></span>
                                        <span class="tb-btn"><svg><use href="#i-hr"/></svg></span>
                                        <span class="tb-btn"><svg><use href="#i-date"/></svg></span>
                                        <span class="tb-btn"><svg><use href="#i-clock"/></svg></span>
                                        <span class="tb-btn tb-omega">Ω</span>
                                        <span class="tb-btn"><svg><use href="#i-snap"/></svg></span>
                                        <span class="tb-btn"><svg><use href="#i-word"/></svg></span>
                                        <span class="tb-sep"></span>
                                        <span class="tb-btn"><svg><use href="#i-grid"/></svg></span>
                                        <span class="tb-btn"><svg><use href="#i-grid-del"/></svg></span>
                                        <span class="tb-btn"><svg><use href="#i-caption"/></svg></span>
                                        <span class="tb-btn"><svg><use href="#i-row-up"/></svg></span>
                                        <span class="tb-btn"><svg><use href="#i-row-del"/></svg></span>
                                        <span class="tb-btn"><svg><use href="#i-col-ins"/></svg></span>
                                        <span class="tb-btn"><svg><use href="#i-col-del"/></svg></span>
                                        <span class="tb-btn"><svg><use href="#i-merge"/></svg></span>
                                        <span class="tb-btn"><svg><use href="#i-merge-r"/></svg></span>
                                    </div>
                                    <div class="edit-row d-flex align-items-center">
                                        <span class="tb-btn"><svg><use href="#i-merge-d"/></svg></span>
                                        <span class="tb-btn"><svg><use href="#i-cell-h"/></svg></span>
                                        <span class="tb-btn"><svg><use href="#i-cell-r"/></svg></span>
                                        <span class="tb-btn"><svg><use href="#i-cell-c"/></svg></span>
                                        <span class="tb-btn"><svg><use href="#i-chart"/></svg></span>
                                        <span class="tb-sep"></span>
                                        <span class="tb-btn"><svg><use href="#i-print"/></svg></span>
                                        <span class="tb-btn"><svg><use href="#i-find"/></svg></span>
                                        <span class="tb-btn"><svg><use href="#i-binoc"/></svg></span>
                                        <span class="tb-btn"><svg><use href="#i-pdoc"/></svg></span>
                                        <span class="tb-btn"><svg><use href="#i-help"/></svg></span>
                                    </div>
                                </div>
                                <div class="edit-body"></div>
                                <div class="edit-foot d-flex justify-content-between">
                                    <span>元素路径:</span>
                                    <span class="edit-count">字数统计</span>
                                </div>
                            </div>
                        </td>
                    </tr>
                    <tr class="r-actions">
                        <td></td>
                        <td>
                            <button class="plain-btn" type="button">添加资讯内容</button>
                            <button class="plain-btn" type="button">重新填写</button>
                        </td>
                    </tr>
                </table>
            </div>
            <div class="pane-foot"></div>
        </main>
    </div>

    <script src="https://cdn.jsdelivr.net/npm/bootstrap@5.3.0/dist/js/bootstrap.bundle.min.js"></script>
</body>

</html>
